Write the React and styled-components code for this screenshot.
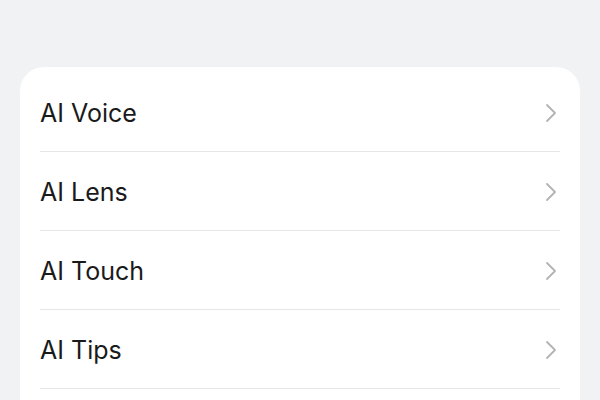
import React from "react";
import styled, { createGlobalStyle } from "styled-components";

const Global = createGlobalStyle`
  html, body { margin: 0; padding: 0; background: #f1f2f4; }
  body { font-family: Inter, "Noto Sans", sans-serif; }
`;

const Page = styled.div`
  width: 600px;
  height: 400px;
  overflow: hidden;
  padding: 67px 20px 0;
  box-sizing: border-box;
  background: #f1f2f4;
`;

const Card = styled.div`
  background: #ffffff;
  border-radius: 24px;
  padding: 6px 20px 60px;
`;

const Row = styled.div`
  display: flex;
  align-items: center;
  justify-content: space-between;
  height: 78px;
  border-bottom: 1px solid #e6e6e6;
`;

const Label = styled.span`
  font-size: 25px;
  line-height: 30px;
  padding-top: 2px;
  color: #1a1a1a;
  font-weight: 400;
`;

const Chevron = styled.svg`
  width: 12px;
  height: 20px;
  margin-right: 3px;
  margin-top: 2px;
`;

const items = ["AI Voice", "AI Lens", "AI Touch", "AI Tips"];

export default function App() {
  return (
    <>
      <Global />
      <Page>
        <Card>
          {items.map((t) => (
            <Row key={t}>
              <Label>{t}</Label>
              <Chevron viewBox="0 0 12 20" fill="none">
                <path d="M2 2 L10 10 L2 18" stroke="#b3b3b3" strokeWidth="1.8" strokeLinecap="round" strokeLinejoin="round" />
              </Chevron>
            </Row>
          ))}
        </Card>
      </Page>
    </>
  );
}
